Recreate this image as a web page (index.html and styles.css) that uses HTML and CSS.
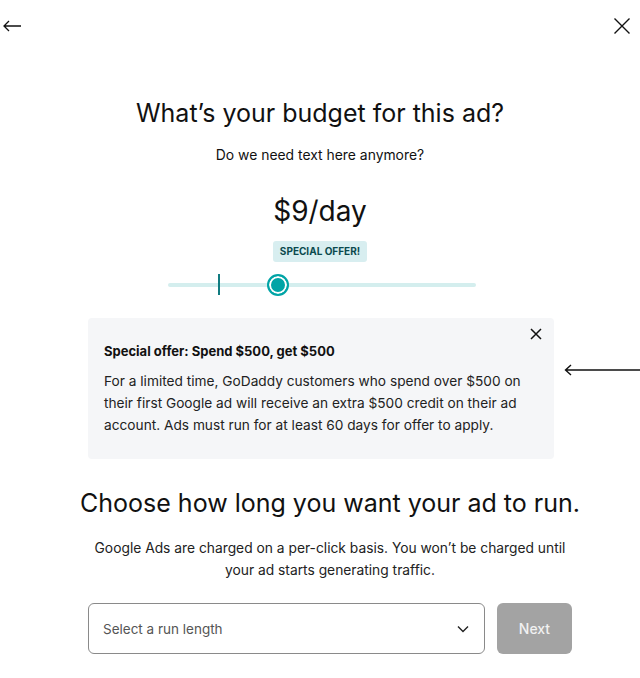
FILE: index.html
```html
<!DOCTYPE html>
<html lang="en">
<head>
<meta charset="utf-8">
<link rel="stylesheet" href="styles.css">
</head>
<body>
<div class="page">
  <header class="topbar">
    <button class="icon-btn back" aria-label="Back">
      <svg width="20" height="12" viewBox="0 0 20 12"><path d="M19 6H2M7 1L2 6l5 5" fill="none" stroke="#111" stroke-width="1.3"/></svg>
    </button>
    <button class="icon-btn close" aria-label="Close">
      <svg width="18" height="18" viewBox="0 0 18 18"><path d="M1.5 1.5l15 15M16.5 1.5l-15 15" fill="none" stroke="#111" stroke-width="1.4"/></svg>
    </button>
  </header>

  <main class="content">
    <h1 class="title">What’s your budget for this ad?</h1>
    <p class="subtitle">Do we need text here anymore?</p>
    <div class="amount">$9/day</div>
    <span class="badge">SPECIAL OFFER!</span>
    <div class="slider">
      <div class="track"></div>
      <div class="tick"></div>
      <div class="thumb"></div>
    </div>

    <div class="offer-wrap">
      <section class="offer">
        <button class="offer-close" aria-label="Dismiss">
          <svg width="12" height="12" viewBox="0 0 12 12"><path d="M1 1l10 10M11 1L1 11" fill="none" stroke="#111" stroke-width="1.5"/></svg>
        </button>
        <h2 class="offer-title">Special offer: Spend $500, get $500</h2>
        <p class="offer-text">For a limited time, GoDaddy customers who spend over $500 on their first Google ad will receive an extra $500 credit on their ad account. Ads must run for at least 60 days for offer to apply.</p>
      </section>
      <svg class="annot" width="76" height="12" viewBox="0 0 76 12"><path d="M76 6H2M7 1L1.5 6 7 11" fill="none" stroke="#111" stroke-width="1.4"/></svg>
    </div>

    <div class="lower">
      <h2 class="title title2">Choose how long you want your ad to run.</h2>
      <p class="note">Google Ads are charged on a per-click basis. You won’t be charged until your ad starts generating traffic.</p>

      <div class="controls">
        <div class="select">
          <span>Select a run length</span>
          <svg width="12" height="8" viewBox="0 0 12 8"><path d="M1 1.5l5 5 5-5" fill="none" stroke="#222" stroke-width="1.4"/></svg>
        </div>
        <button class="next">Next</button>
      </div>
    </div>
  </main>
</div>
</body>
</html>
```
FILE: styles.css
```css
* { box-sizing: border-box; }
html, body { margin: 0; padding: 0; background: #fff; }
body {
  font-family: "Inter", "Noto Sans", sans-serif;
  color: #111;
  width: 640px;
  height: 678px;
  overflow: hidden;
}
.page { position: relative; }
.topbar {
  display: flex;
  justify-content: space-between;
  align-items: center;
  height: 52px;
  padding: 0 9px 0 2px;
}
.icon-btn {
  background: none;
  border: 0;
  padding: 0;
  display: flex;
}
.content {
  display: flex;
  flex-direction: column;
  align-items: center;
}
.title {
  margin: 45px 0 0;
  font-size: 25px;
  font-weight: 400;
  line-height: 32px;
  letter-spacing: 0;
  color: #111;
}
.subtitle {
  margin: 16px 0 0;
  font-size: 13.9px;
  line-height: 20px;
}
.amount {
  margin-top: 29px;
  font-size: 28px;
  line-height: 34px;
  font-weight: 400;
}
.badge {
  margin-top: 13px;
  background: #d8eef0;
  color: #0b4a4e;
  font-size: 10px;
  font-weight: 700;
  letter-spacing: 0;
  padding: 4px 7px;
  border-radius: 3px;
  line-height: 13px;
}
.slider {
  position: relative;
  width: 308px;
  height: 24px;
  margin-top: 11px;
  margin-left: 4px;
}
.track {
  position: absolute;
  left: 0; right: 0; top: 10px;
  height: 4px;
  border-radius: 2px;
  background: #d4eeee;
}
.tick {
  position: absolute;
  left: 50px;
  top: 1px;
  width: 1.5px;
  height: 21px;
  background: #117b80;
}
.thumb {
  position: absolute;
  left: 99px;
  top: 1px;
  width: 22px;
  height: 22px;
  border-radius: 50%;
  background: #00a4a6;
  border: 2px solid #00a4a6;
  box-shadow: inset 0 0 0 2px #fff;
}
.offer-wrap {
  position: relative;
  width: 640px;
  display: flex;
  justify-content: center;
  margin-top: 21px;
}
.offer {
  position: relative;
  width: 466px;
  margin-left: 2px;
  background: #f5f6f8;
  border-radius: 4px;
  padding: 24px 16px 23px 16px;
}
.offer-close {
  position: absolute;
  top: 10px;
  right: 12px;
  background: none;
  border: 0;
  padding: 0;
  display: flex;
}
.offer-title {
  margin: 0;
  font-size: 13px;
  font-weight: 700;
  line-height: 18px;
}
.offer-text {
  margin: 10px 0 0;
  font-size: 13.7px;
  line-height: 22px;
  color: #222;
}
.annot {
  position: absolute;
  right: 0;
  top: 46px;
}
.lower {
  display: flex;
  flex-direction: column;
  align-items: center;
  padding-left: 20px;
}
.title2 { margin-top: 28px; }
.note {
  margin: 18px 0 0;
  width: 490px;
  text-align: center;
  font-size: 13.8px;
  line-height: 22px;
  color: #222;
}
.controls {
  display: flex;
  gap: 12px;
  margin-top: 22px;
}
.select {
  width: 397px;
  height: 51px;
  border: 1px solid #8a8a8a;
  border-radius: 6px;
  display: flex;
  align-items: center;
  justify-content: space-between;
  padding: 0 15px 0 14px;
  font-size: 13.5px;
  color: #555;
}
.next {
  width: 75px;
  height: 51px;
  border: 0;
  border-radius: 6px;
  background: #a3a3a3;
  color: #f1f1f1;
  font-family: inherit;
  font-size: 14px;
  font-weight: 500;
}
```
